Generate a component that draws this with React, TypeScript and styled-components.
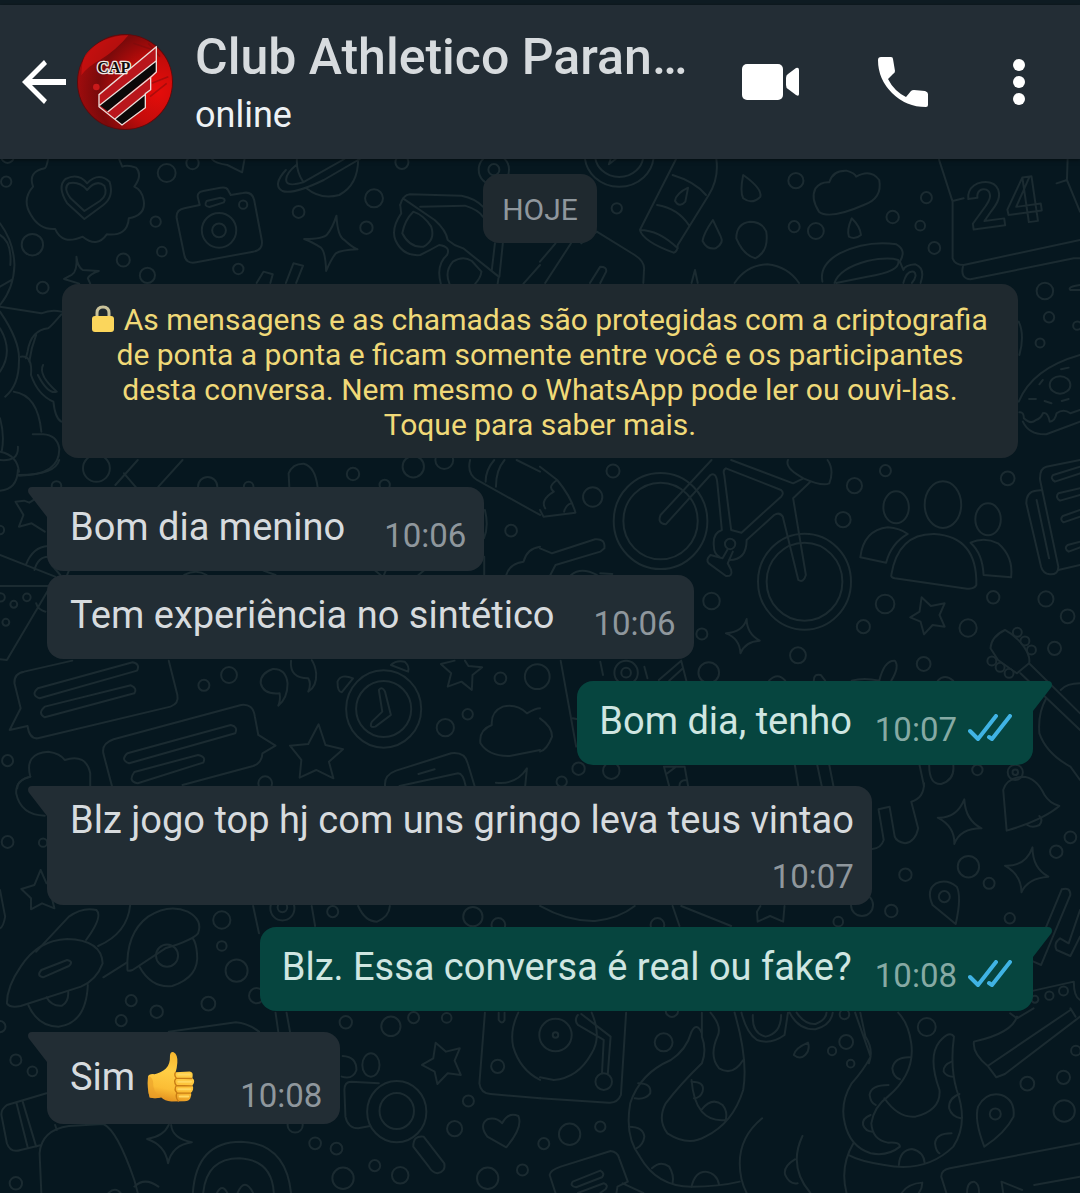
import React from 'react';
import styled, { createGlobalStyle, css } from 'styled-components';

const color = {
  strip: '#0f1c23',
  bar: '#232d35',
  wallpaper: '#06171f',
  doodle: '#1b2b31',
  incoming: '#222d34',
  outgoing: '#06453f',
  pill: '#1f292f',
  text: '#d7dbde',
  sentText: '#cfe6e1',
  muted: '#8f979d',
  sentMuted: '#86aaa4',
  notice: '#f0d978',
  tick: '#40b3e4',
};

const GlobalStyle = createGlobalStyle`
  *, *::before, *::after { box-sizing: border-box; }
  body {
    margin: 0;
    background: ${color.wallpaper};
    font-family: Roboto, 'Noto Sans', sans-serif;
  }
  button {
    border: 0;
    padding: 0;
    background: none;
    color: inherit;
    font: inherit;
    cursor: pointer;
  }
`;

/* ---------- Wallpaper ---------- */

type Dot = [number, number, number, number?];
type Tile = { x: number; y: number; dots: Dot[]; lines: string[] };

const tiles: Tile[] = [
  {
    x: 0,
    y: 155,
    dots: [
      [18, 80, 15], [22, 5, 18], [484, 54, 26], [559, 24, 18], [452, 200, 15], [94, 269, 31],
      [358, 315, 19], [428, 361, 22], [470, 290, 14], [124, 398, 17], [692, 342, 15], [867, 171, 17],
      [1086, 130, 26], [1064, 218, 18], [1167, 22, 19], [1434, 44, 16], [1434, 44, 44],
      [636, 226, 50], [636, 226, 20], [706, 149, 12],
    ],
    lines: [
      'M140 10Q135 38 130 40Q80 50 96 95Q62 135 90 180Q115 225 160 222Q180 272 240 245Q282 280 310 238Q370 245 374 190Q425 180 417 135Q412 105 390 95Q415 60 395 38Q370 28 355 35L345 10',
      'M245 192L195 145Q165 95 190 72Q228 52 253 85Q285 50 318 80Q332 125 300 150Z',
      'M245 168L205 130Q182 98 200 85Q230 78 253 105Q280 72 303 92Q315 120 290 138Z',
      'M535 160Q510 165 513 190L535 300Q540 328 570 322L735 290Q765 285 760 255L738 135Q732 108 705 114L670 120L662 105Q658 95 640 98L590 108Q570 112 575 130L580 150Z',
      'M600 138L640 128Q658 130 650 142L608 156Q590 154 600 138Z',
      'M977 182Q980 245 1000 255Q1020 275 1038 283Q990 285 975 295Q960 315 947 348Q945 290 932 278Q905 260 883 252Q940 252 950 238Q965 220 977 182Z',
      'M222 305Q225 335 240 345L287 348Q260 358 255 370L262 386M222 305Q225 350 208 360L186 372L230 386',
      'M862 12Q860 50 880 80M1040 12Q1040 90 985 120Q930 135 890 100M830 45Q790 90 820 108Q850 120 940 75L1045 12M860 30Q825 60 832 80Q838 95 880 82L1000 12',
      'M615 12Q625 25 660 30L703 52L710 12',
      'M1162 150Q1170 120 1190 118L1340 122Q1380 130 1402 155M1220 155L1350 152Q1390 165 1402 185M1170 130L1262 195Q1295 225 1300 255L1320 270L1345 280L1448 365L1445 386',
      'M1162 150L1165 175Q1135 220 1148 255Q1170 305 1220 300Q1250 285 1275 270Q1310 275 1298 300Q1265 330 1280 386',
      'M1200 170Q1175 195 1168 235Q1190 280 1230 275Q1265 255 1252 215Q1230 180 1200 170Z',
      'M1305 386Q1290 350 1315 320Q1345 300 1370 318L1398 350Q1395 370 1380 386M1437 265L1428 345M1460 265L1450 365M1520 386L1568 330',
      'M0 205Q40 260 42 330Q40 400 0 450M0 240Q35 260 30 330M34 375L0 395',
      'M0 455L120 475Q150 462 178 470M178 478Q150 512 140 520Q90 525 80 590L75 610M105 540Q90 580 85 620',
      'M0 470Q60 560 55 620Q55 690 15 725M0 520Q40 590 0 650M40 710Q110 720 120 830M95 838L125 838Q165 840 172 880Q175 960 55 962M0 890Q50 900 55 950M0 790Q14 840 5 890',
      'M60 605Q95 600 90 660Q110 720 155 740Q160 790 178 800M125 630Q110 660 165 710Q140 720 110 660',
      'M745 384L765 350L792 358L785 384M830 384L852 325L880 332L860 384',
    ],
  },
  {
    x: 540,
    y: 155,
    dots: [
      [223, 160, 15], [743, 77, 22], [738, 215, 16], [801, 228, 23], [1024, 186, 18], [1104, 212, 14],
      [1122, 128, 16], [1145, 279, 17], [1466, 408, 24], [1478, 487, 15], [1452, 564, 13],
      [1560, 512, 12], [230, 0, 100, 95], [230, 0, 70, 66], [1510, 690, 30, 26],
    ],
    lines: [
      'M205 12L200 28L220 12',
      'M395 12L290 225Q300 260 388 293Q400 290 400 270L490 120Q520 70 512 12M290 225Q345 225 400 280M385 60Q450 80 482 120M340 150Q400 160 432 210',
      'M430 98Q395 115 392 138Q405 160 422 140Z',
      'M590 60Q580 110 590 130Q615 150 640 125Q645 100 590 60Z',
      'M502 195Q475 235 472 258Q485 285 510 280Q535 265 525 245Z',
      'M905 190Q890 225 897 245Q915 255 932 240Q930 215 905 190Z',
      'M610 200Q570 205 570 250Q590 300 625 310Q665 290 657 230Q645 200 610 200Z',
      'M840 82Q850 45 890 47Q915 55 918 65Q960 40 985 75Q995 130 940 150Q840 195 810 170Q785 130 800 100Q815 80 840 82Z',
      'M820 380Q810 330 870 295Q950 255 1035 268Q1065 285 1045 320M855 384Q870 340 950 318Q1010 305 1040 315Q1050 350 950 365L860 384M1045 320L1055 345Q1060 330 1090 328Q1120 340 1105 384M1055 384Q1065 345 1085 350Q1098 360 1080 384',
      'M565 384Q600 330 660 328Q720 335 752 384M440 384L450 345L458 384',
      'M165 230L275 300Q305 320 302 345L300 384M165 230L120 265M90 265L15 384M45 265L0 320M145 384L175 335Q195 335 192 350L175 384',
      'M1158 12L1198 140L1198 310Q1205 330 1230 330L1568 255M1198 138L1230 130M1532 12L1530 75L1568 170M1500 85L1530 75M1228 335Q1220 370 1250 373L1550 310L1568 310',
      'M1568 600Q1430 640 1390 740M1392 772Q1405 770 1405 790Q1425 810 1440 795Q1455 790 1460 775Q1475 770 1480 800Q1495 800 1500 775Q1520 760 1540 775L1568 765M1402 800Q1420 840 1470 838L1568 800',
      'M1450 688L1460 675M1513 643L1535 638M1420 732L1440 732M1465 738L1485 745M1515 738L1535 732M1390 500Q1408 540 1392 600M1568 390Q1530 395 1540 405L1568 405',
    ],
  },
  {
    x: 0,
    y: 460,
    dots: [
      [280, 25, 39], [1025, 42, 18], [1200, 20, 31], [1290, 0, 26], [603, 80, 28], [722, 80, 14],
      [164, 78, 14], [1117, 75, 15], [1484, 212, 17], [0, 210, 12], [2, 412, 12], [78, 412, 11],
      [40, 433, 10], [17, 487, 10], [22, 902, 16], [592, 676, 16], [665, 645, 23], [1293, 803, 25],
      [1358, 763, 15], [1453, 655, 17], [1560, 650, 36], [770, 970, 20], [1114, 747, 109, 116], [1114, 747, 80, 84],
    ],
    lines: [
      'M0 0Q55 5 52 -40M55 45Q160 45 172 0M0 92Q50 88 52 30',
      'M335 75L400 0M360 40L395 82M460 80L530 0M840 80L838 40Q850 10 882 11Q915 20 922 80',
      'M1365 0Q1355 40 1385 60L1568 165M1410 65Q1410 30 1435 0M1440 80Q1440 30 1465 0M1500 0L1568 35',
      'M100 118L85 128L70 122L45 125Q60 150 68 165L55 200L92 190L130 215',
      'M0 285L160 350M0 378L150 378M140 390L20 600L0 598M75 315Q95 260 140 258M100 330Q110 290 140 290M175 345L150 315M195 345L200 332M105 430Q110 450 132 455',
      'M535 345Q570 325 600 345M765 332L800 345M1090 332L1105 345M1115 345L1120 332M1215 345L1230 332',
      'M1568 260Q1530 265 1520 305Q1480 310 1470 345M1408 150Q1420 200 1405 235M1406 290L1406 345',
      'M210 602L70 635Q40 640 42 670L60 745L28 810L80 798Q85 838 110 835L495 740Q520 730 515 705L490 602',
      'M110 685L385 607Q408 612 398 632L115 715Q88 705 110 685ZM130 740L380 676Q400 685 390 700L130 772Q108 760 130 740Z',
      'M325 978L300 880Q295 850 330 838L700 735Q735 730 740 770L750 825L800 857L762 880Q760 910 735 918L530 975',
      'M370 880L670 795Q692 800 683 820L375 910Q348 900 370 880ZM390 936L575 885Q600 890 590 908L400 970Q370 965 390 936Z',
      'M50 985Q50 960 88 950Q70 880 140 875Q175 880 188 900Q250 880 262 940L262 980',
      'M835 670Q830 625 792 627Q755 640 757 670Q765 705 812 700Q815 720 808 737Q835 715 835 670ZM845 602Q840 655 895 655Q905 670 895 695Q920 680 918 640Q915 615 905 600',
      'M1100 690Q1110 678 1118 695L1135 765L1090 800Q1070 805 1080 785L1110 755ZM1025 655Q990 640 980 665Q980 695 992 697ZM1135 615Q1150 600 1175 605Q1190 620 1185 635Z',
      'M925 793L945 855L996 868L955 905L968 955L918 930L870 953L875 900L842 857L895 852Z',
      'M1320 602L1280 612L1310 640L1300 680L1340 665L1370 690L1372 645L1400 622L1360 618L1350 602',
      'M1568 745Q1555 745 1530 760Q1500 730 1460 740Q1425 755 1428 795Q1390 810 1395 850Q1420 890 1480 888L1568 870',
      'M1118 978Q1115 945 1150 932L1310 880Q1350 875 1358 910L1378 978M1160 978L1330 940Q1345 940 1352 978M1215 942L1262 928M1440 968Q1500 975 1530 925L1525 978',
    ],
  },
  {
    x: 540,
    y: 460,
    dots: [
      [212, 33, 19], [153, 111, 28], [913, 77, 22], [880, 179, 22], [1003, 32, 16], [1358, 55, 20],
      [498, 423, 24], [470, 522, 16], [749, 586, 23], [939, 500, 19], [1002, 432, 27], [1114, 612, 20],
      [1316, 412, 18], [1469, 417, 22], [1532, 469, 20], [1494, 565, 19], [1243, 504, 25], [250, 638, 34],
      [250, 638, 14], [490, 638, 30], [112, 926, 18], [207, 932, 24], [63, 965, 15], [1270, 930, 15],
      [1380, 937, 22], [1380, 937, 8], [350, 183, 136, 144], [350, 183, 108, 115], [768, 365, 135, 144],
      [768, 365, 110, 117], [552, 252, 15], [1170, 134, 53, 70], [1034, 142, 37, 48], [1301, 178, 37, 48],
      [1386, 517, 13], [1408, 543, 13], [1427, 570, 13], [1312, 603, 13], [1336, 622, 13], [1362, 640, 13],
    ],
    lines: [
      'M498 0L350 165Q340 190 365 193L495 45Q512 35 515 70L528 210M555 0L735 70L765 55Q710 25 720 0M765 55Q820 80 840 70Q855 30 835 0M785 65L735 115L772 345Q765 370 750 360L705 170Q695 155 680 165L600 240Q600 300 550 300M540 25L700 90Q710 100 700 110L585 218L555 210L535 45Q530 30 540 25M528 210Q500 220 505 260Q505 280 520 290',
      'M545 268L530 295L495 285Q480 300 490 310L540 348Q560 350 555 330L545 310L560 275',
      'M0 20L50 60Q90 110 103 158L10 170L0 150M50 60Q20 80 40 95Q0 120 15 145M70 155Q75 135 90 130',
      'M0 265L35 280L160 238Q190 235 187 265L175 275L45 315L30 345M90 345Q120 320 165 345M175 340L210 342',
      'M1020 345Q1040 220 1145 222Q1270 230 1267 375Q1262 388 1240 386L1030 355Q1018 352 1020 345ZM1005 308L930 292Q940 210 1010 202Q1045 205 1068 222Q1020 250 1005 308ZM1250 248Q1290 230 1330 250Q1375 290 1368 352L1288 345Q1285 280 1250 248Z',
      'M1568 0L1470 20Q1450 25 1452 60L1505 320Q1505 345 1480 343Q1460 340 1455 320L1412 130Q1412 95 1440 92L1458 90M1505 330L1568 315M1442 120L1478 295M1568 40L1495 65Q1480 55 1490 45L1568 20M1568 105L1510 122Q1495 112 1505 100L1568 85M1568 170L1520 187Q1508 178 1518 168L1568 150M1568 262L1535 275Q1520 265 1532 255L1568 245',
      'M1108 412L1135 438L1175 430L1160 465L1175 500L1140 495L1115 523L1105 485L1075 472L1102 455ZM600 477Q600 520 638 542Q595 545 582 580Q580 535 540 520Q590 515 600 477Z',
      'M1350 510Q1310 530 1308 565L1330 600Q1370 630 1385 640L1420 610Q1425 590 1405 560Q1385 530 1350 510ZM1420 610L1568 760M1395 640L1568 810M1568 670Q1530 670 1512 690M1470 715Q1445 760 1450 820Q1470 880 1540 920L1568 960',
      'M60 602L105 860M175 605L183 645M303 620L312 655M345 660L410 602M375 662L415 625M410 602L425 662M0 775Q35 800 35 830Q20 870 0 875M95 775L110 778',
      'M665 662Q690 635 712 662M795 662Q795 640 815 645L828 662M985 662Q1000 600 1030 602Q1045 620 1020 662M905 662Q940 652 985 662M1155 662Q1175 640 1200 662',
      'M375 978L360 920L420 920L430 978M370 940L395 920M405 978Q405 960 425 960M740 915L750 978M805 915L818 978M840 915L852 978M1102 915L1115 978M1130 915Q1130 975 1165 972Q1205 960 1200 915',
    ],
  },
  {
    x: 0,
    y: 770,
    dots: [
      [22, 216, 17], [125, 218, 12], [644, 450, 25], [644, 528, 14], [687, 602, 32], [605, 701, 20],
      [455, 725, 18], [381, 692, 16], [352, 752, 16], [46, 870, 16], [94, 904, 14], [46, 1240, 18],
      [820, 415, 35], [820, 412, 14], [966, 425, 16], [1373, 440, 28], [1447, 465, 20], [745, 677, 22],
      [1004, 757, 18], [1135, 769, 28], [1201, 743, 16], [1297, 744, 14], [1445, 889, 19], [1360, 993, 16],
      [1320, 1076, 22], [915, 1120, 17], [977, 1136, 17], [1088, 1187, 16], [996, 1225, 31],
      [1162, 1216, 24], [1416, 1225, 31], [1517, 1200, 16], [857, 1065, 22], [0, 770, 16], [485, 557, 32],
      [1077, 885, 25, 35], [1152, 1025, 86, 92], [1152, 1023, 50, 54],
    ],
    lines: [
      'M20 700Q20 650 60 590Q110 510 195 507Q295 510 298 580Q280 630 235 650L60 708Q30 715 20 700ZM120 600L195 570Q215 575 200 588L125 622Q105 618 120 600Z',
      'M105 545L200 440Q240 410 280 420Q300 440 250 510M378 405Q370 490 285 528M82 705Q110 770 170 770Q250 760 255 645M135 682Q150 710 180 707Q200 695 198 665M300 622L368 578',
      'M370 600Q365 490 430 440Q490 400 545 425Q590 450 575 490Q560 510 480 535L385 600Q370 605 370 600ZM405 590Q440 655 500 648Q580 620 572 550Q570 520 560 505',
      'M118 300L100 345L62 357L90 385L90 418L122 400L158 415L152 390M118 300L135 340M88 20Q45 30 47 70Q60 135 130 137M0 360L15 440Q10 470 0 475',
      'M735 408L752 490M905 408L915 468M1040 408Q1060 455 1095 455Q1130 440 1132 408M490 785L685 757Q720 760 752 785M800 728L808 785M832 728L842 785',
      'M1265 818L1295 845L1335 835L1320 872L1338 915L1300 910L1270 942L1262 905L1225 885L1258 865Z',
      'M995 858Q1035 860 1035 900Q1025 930 992 920M1100 940L1020 935Q1000 935 1000 960L1003 1040Q1010 1075 1040 1075L1075 1068M1230 1100L1290 1180Q1295 1205 1270 1210Q1255 1208 1245 1190L1200 1130Q1200 1095 1230 1100Z',
      'M1470 1132L1415 1100Q1390 1065 1415 1048Q1440 1040 1458 1060Q1475 1025 1505 1038Q1520 1070 1470 1132Z',
      'M1408 728L1392 940Q1395 970 1425 972L1568 985M1448 728L1448 750Q1458 765 1465 750L1465 728M1505 728Q1480 780 1490 830Q1510 900 1568 930',
      'M135 970L20 1005Q0 1020 5 1040L20 1120Q30 1150 60 1140L120 1125M48 1000L80 1130M65 992L105 1130M120 1269L115 1150Q120 1080 200 1068L300 1062Q340 1080 390 1230L400 1269M160 1065L165 1080M390 1250Q420 1220 460 1250',
      'M497 1065Q500 1105 557 1117Q500 1125 488 1180Q480 1125 427 1107Q475 1100 490 1065M560 1269Q570 1115 700 1115Q830 1120 845 1269M590 1269Q600 1165 695 1165Q790 1170 795 1269M630 1269Q645 1240 660 1269M690 1269Q710 1220 735 1269M315 1269Q335 1250 350 1269',
    ],
  },
  {
    x: 540,
    y: 770,
    dots: [
      [1061, 314, 18], [1244, 290, 31], [1304, 340, 16], [1540, 202, 17], [1499, 245, 18], [1020, 423, 18],
      [1364, 445, 15], [935, 405, 32], [866, 455, 14], [341, 465, 20], [1174, 380, 16], [359, 817, 26],
      [848, 843, 12], [889, 816, 20], [902, 881, 11], [1123, 771, 26], [1415, 941, 20], [1520, 922, 19],
      [1522, 1023, 31], [1556, 842, 14], [86, 1093, 31], [175, 1070, 15], [11, 1121, 16], [1322, 1032, 16],
      [1437, 688, 10], [1479, 677, 12], [1520, 663, 13], [884, 733, 14], [383, 722, 18], [45, 795, 47],
      [45, 795, 8], [185, 935, 24],
    ],
    lines: [
      'M1115 40Q1115 85 1078 95L1098 175Q1090 215 1060 220Q1035 215 1030 200L1015 110L983 118L998 210Q990 235 965 237',
      'M1355 182L1345 60Q1355 25 1400 20Q1440 20 1465 75Q1480 100 1508 108Q1460 150 1355 182ZM1415 165Q1430 175 1450 165Q1462 150 1450 138',
      'M1232 88Q1235 150 1282 175Q1220 175 1203 222Q1205 170 1155 143Q1210 145 1232 88ZM1430 232Q1430 295 1476 320Q1415 325 1398 367Q1398 315 1350 287Q1410 290 1430 232Z',
      'M1207 462L1140 405Q1120 360 1150 340Q1180 325 1210 350Q1225 380 1207 462Z',
      'M1515 358L1470 470M1515 358Q1540 350 1540 375L1455 585L1433 575M1568 420L1535 520L1510 505Q1490 520 1500 540L1540 558L1568 500',
      'M1433 662L1550 635Q1550 680 1568 690M1385 740Q1370 790 1260 815Q1255 850 1300 888L1325 922L1350 912L1568 740M1300 888L1540 720M1540 715L1555 740M1365 730L1385 745L1433 715',
      'M0 408Q80 455 160 453Q230 445 275 408M385 408L405 468M410 408L555 468M640 408L630 425L632 455L668 438L706 455L710 408',
      'M150 728Q180 800 150 850Q110 925 40 930L0 922M110 735Q98 750 110 765L185 810L180 910M120 732L205 800L197 910M250 728L235 975Q225 1000 200 998L0 985',
      'M470 728L470 800Q485 840 470 880Q410 940 365 1000Q340 1050 370 1090Q430 1130 480 1100Q560 1060 590 960Q605 870 565 728M470 790Q455 755 440 785Q425 840 380 870Q290 910 262 1000Q245 1100 290 1160Q340 1250 440 1250Q520 1250 580 1235M495 728Q530 770 515 800Q490 860 520 895Q560 920 590 870M440 930Q450 1060 540 1050',
      'M440 935Q480 935 472 965Q465 985 447 985M470 1018Q500 980 530 1005Q545 1025 540 1048M285 940Q325 940 320 970Q305 990 275 985M258 1070Q300 1070 303 1100Q300 1125 280 1135M325 1195Q350 1170 375 1190Q390 1215 385 1240M440 1250Q450 1205 480 1205Q515 1210 520 1245',
      'M645 1045Q580 1100 580 1180Q580 1230 600 1269M762 1098Q720 1190 785 1269M740 1168Q705 1190 712 1215Q725 1245 748 1240',
      'M585 728Q600 790 630 810Q670 825 710 795L720 728M618 735Q615 790 655 800Q700 790 700 735M725 728Q750 780 800 778Q845 765 850 728M745 728Q770 765 800 762Q830 750 832 728M778 818Q740 835 737 855Q755 870 770 855Q785 840 778 818Z',
      'M915 728L960 860Q940 900 905 940Q870 1000 885 1060Q900 1130 960 1150Q1010 1160 1045 1130Q1045 1115 1010 1118Q965 1110 962 1060Q970 1010 1010 980Q1090 910 1078 820Q1070 760 1040 728M930 728L945 800Q970 840 955 880',
      'M1000 985Q1040 1045 1090 1040Q1165 1020 1160 960Q1125 860 1160 815Q1190 780 1202 800Q1190 890 1210 960Q1245 1060 1200 1130Q1120 1210 1000 1185Q930 1175 895 1155M910 1120Q870 1190 890 1269',
      'M1075 862Q1030 860 1023 895Q1025 920 1045 928M1012 945Q960 945 957 975Q960 1000 975 1005M960 1035Q935 1045 938 1065Q945 1085 965 1085M1195 875Q1170 885 1172 905Q1180 920 1200 920M1218 972Q1185 985 1188 1015Q1195 1040 1222 1045M1195 1090Q1150 1090 1147 1120Q1150 1145 1160 1150M1042 1185Q1045 1140 1080 1137Q1115 1145 1117 1180',
      'M1290 1130Q1260 1050 1272 1010Q1295 965 1340 975Q1380 990 1375 1040Q1350 1090 1290 1130Z',
      'M1180 1269L1165 1220Q1165 1200 1190 1195L1568 1120M1240 1269Q1240 1235 1260 1235Q1275 1240 1275 1269M1345 1269L1340 1235L1400 1260M1435 1245L1568 1220M1050 1269Q1070 1240 1110 1238Q1110 1255 1100 1269',
      'M45 1269L28 1215Q30 1200 60 1190L205 1143Q225 1145 230 1165L255 1235L225 1250L222 1269M240 1240L300 1269M95 1235L175 1202Q190 1210 180 1222L105 1252Q85 1248 95 1235ZM110 1269L185 1240Q200 1245 190 1258L175 1269',
    ],
  },
];

const WallpaperArt = styled.svg`
  position: absolute;
  inset: 0;
  width: 100%;
  height: 100%;
  z-index: -1;
  fill: none;
  stroke: ${color.doodle};
  stroke-width: 2px;
  stroke-linecap: round;
  stroke-linejoin: round;

  path, ellipse, text { vector-effect: non-scaling-stroke; }
  text { font: 700 190px Roboto, sans-serif; }
`;

const Wallpaper = () => (
  <WallpaperArt viewBox="0 159 1080 1034" preserveAspectRatio="xMidYMin slice" aria-hidden="true">
    {tiles.map((tile) => (
      <g key={`${tile.x}-${tile.y}`} transform={`translate(${tile.x} ${tile.y}) scale(0.3444 0.3333)`}>
        {tile.dots.map(([cx, cy, rx, ry = rx * 1.04], i) => (
          <ellipse key={i} cx={cx} cy={cy} rx={rx} ry={ry} />
        ))}
        {tile.lines.map((d) => (
          <path key={d} d={d} />
        ))}
      </g>
    ))}
    <g transform="translate(540 155) scale(0.3444 0.3333)">
      <text transform="translate(1250 225) rotate(-8)">24</text>
    </g>
  </WallpaperArt>
);

/* ---------- Layout ---------- */

const Screen = styled.div`
  display: flex;
  flex-direction: column;
  min-height: 100vh;
`;

const StatusStrip = styled.div`
  height: 5px;
  background: ${color.strip};
`;

const TopBar = styled.header`
  display: flex;
  align-items: center;
  min-height: 154px;
  padding: 0 47px 0 20px;
  background: ${color.bar};
  box-shadow: 0 1px 4px rgba(0, 0, 0, 0.5);
  z-index: 1;
`;

const IconButton = styled.button<{ $width: number }>`
  display: flex;
  justify-content: center;
  flex: none;
  width: ${({ $width }) => $width}px;
  color: #fff;

  svg { display: block; fill: currentColor; }
`;

const Avatar = styled.svg`
  flex: none;
  width: 96px;
  height: 96px;
  margin-left: 9px;
  border-radius: 50%;
`;

const Contact = styled.div`
  flex: 1;
  min-width: 0;
  padding-left: 22px;
  white-space: nowrap;
`;

const ContactName = styled.h1`
  margin: 0;
  color: ${color.text};
  font-size: 50px;
  font-weight: 500;
  line-height: 66px;
`;

const Presence = styled.p`
  margin: 0;
  color: #eef2f5;
  font-size: 36px;
  line-height: 50px;
`;

const Actions = styled.div`
  display: flex;
  align-items: center;
  gap: 72px;
`;

const Chat = styled.main`
  position: relative;
  z-index: 0;
  display: flex;
  flex: 1;
  flex-direction: column;
  align-items: center;
  overflow: hidden;
  padding: 15px 47px 47px;
  background: ${color.wallpaper};
`;

const pill = css`
  border-radius: 16px;
  background: ${color.pill};
  font-size: 30px;
  line-height: 35px;
`;

const DateChip = styled.div`
  ${pill}
  padding: 18px 19px 16px;
  color: ${color.muted};
`;

const Notice = styled.button`
  && {
    ${pill}
    width: 100%;
    max-width: 956px;
    margin: 41px 0 29px;
    padding: 18px 28px 16px;
    color: ${color.notice};
    text-align: center;
  }

  svg { margin-right: 2px; vertical-align: -3px; }
`;

const Messages = styled.ol`
  display: flex;
  flex-direction: column;
  align-self: stretch;
  margin: 0;
  padding: 0;
  list-style: none;
`;

type Layout = 'inline' | 'stacked' | 'emoji';

const layouts = {
  inline: css`padding-top: 17px; padding-bottom: 21px;`,
  stacked: css`flex-direction: column; gap: 20px; padding-top: 11px; padding-bottom: 14px;`,
  emoji: css`padding-top: 17px; padding-bottom: 14px;`,
};

const sides = {
  sent: css`
    align-self: flex-end;
    column-gap: 23px;
    margin-top: 22px;
    padding-left: 22px;
    padding-right: 21px;
    background: ${color.outgoing};
    color: ${color.sentText};
  `,
  received: css`
    align-self: flex-start;
    column-gap: 39px;
    margin-top: 21px;
    padding-left: 23px;
    padding-right: 18px;
    background: ${color.incoming};
    color: ${color.text};
  `,
};

const Bubble = styled.li<{ $sent: boolean; $tail: boolean; $layout: Layout }>`
  position: relative;
  display: flex;
  align-items: flex-end;
  border-radius: 16px;
  ${({ $sent }) => ($sent ? sides.sent : sides.received)}
  ${({ $layout }) => layouts[$layout]}
  ${({ $tail, $sent }) => $tail && ($sent ? 'border-top-right-radius: 0;' : 'border-top-left-radius: 0;')}
  ${({ $tail }) => !$tail && 'margin-top: 4px;'}

  &:first-child { margin-top: 0; }
`;

const Tail = styled.svg<{ $sent: boolean }>`
  position: absolute;
  top: 0;
  width: 19px;
  height: 30px;
  ${({ $sent }) => ($sent ? 'left: 100%;' : 'right: 100%; transform: scaleX(-1);')}
  fill: ${({ $sent }) => ($sent ? color.outgoing : color.incoming)};
`;

const Body = styled.p<{ $layout: Layout }>`
  display: flex;
  align-items: center;
  gap: 12px;
  margin: 0;
  font-size: 38px;
  line-height: ${({ $layout }) => ($layout === 'emoji' ? 56 : 46)}px;
  padding-bottom: ${({ $layout }) => ($layout === 'emoji' ? 5 : 0)}px;
  padding-right: ${({ $layout }) => ($layout === 'emoji' ? 6 : 0)}px;
`;

const Meta = styled.span<{ $sent: boolean }>`
  display: flex;
  align-items: flex-end;
  gap: 11px;
  color: ${({ $sent }) => ($sent ? color.sentMuted : color.muted)};
  font-size: 33px;
  line-height: 28px;
`;

/* ---------- Drawings ---------- */

const Crest = () => (
  <Avatar viewBox="231 102 288 288" role="img" aria-label="Club Athletico Paranaense">
    <defs>
      <radialGradient id="crest-red" cx="0.85" cy="0.6" r="0.85">
        <stop offset="0" stopColor="#e60d0a" />
        <stop offset="0.4" stopColor="#c40c0b" />
        <stop offset="0.75" stopColor="#7a0a0b" />
        <stop offset="1" stopColor="#a00c0d" />
      </radialGradient>
    </defs>
    <circle cx="375" cy="246" r="143" fill="url(#crest-red)" stroke="#5a0b0d" strokeWidth="4" />
    <path d="M256 162Q310 105 385 106Q350 150 300 180Q262 200 244 226Q244 190 256 162Z" fill="#dc1310" opacity="0.6" />
    <path d="M400 130L460 150M455 250L505 230M450 290L500 250M445 130L480 170" stroke="#780b0c" strokeWidth="5" opacity="0.5" />
    <circle cx="289" cy="261" r="10" fill="#c9191a" />
    <path d="M469 140L297 284V320L366 375L436 323V281L452 269V232L469 216Z" fill="#b9161c" />
    <path d="M469 182V214L323 334L299 316Z" fill="#0a0808" />
    <path d="M436 283V322L366 374L344 356Z" fill="#0a0808" />
    <path
      d="M469 140L297 284V320L366 375L436 323V281L452 269V232L469 216ZM469 182L299 316M452 232L323 336M436 283L344 358"
      fill="none"
      stroke="#eadcd8"
      strokeWidth="4"
    />
    <text
      x="292"
      y="220"
      fontFamily="Liberation Serif, serif"
      fontSize="48"
      fontWeight="700"
      fill="#120c0c"
      stroke="#f2eae6"
      strokeWidth="8"
      strokeLinejoin="round"
      paintOrder="stroke"
    >
      CAP
    </text>
  </Avatar>
);

const BackIcon = () => (
  <svg width="44" height="44" viewBox="0 0 44 44" aria-hidden="true">
    <path d="M22 0L25 4L10 19H44V25H10L25 40L22 44L0 22Z" />
  </svg>
);

const VideoIcon = () => (
  <svg width="58" height="36" viewBox="0 0 58 36" aria-hidden="true">
    <rect width="41" height="36" rx="5" />
    <path d="M44 14Q44 11 46 10L54 4Q57 3 57 6V30Q57 33 54 31L46 25Q44 24 44 21Z" />
  </svg>
);

const PhoneIcon = () => (
  <svg width="50" height="50" viewBox="0 0 50 50" aria-hidden="true">
    <path d="M3 0H13Q15 0 15 2L17 14Q17 16 15 17L10 22Q16 34 28 40L33 34Q34 33 36 33L47 34Q50 35 50 37V48Q50 50 48 50Q28 50 14 36Q0 22 0 3Q0 0 3 0Z" />
  </svg>
);

const MenuIcon = () => (
  <svg width="12" height="46" viewBox="0 0 12 46" aria-hidden="true">
    <circle cx="6" cy="6" r="6" />
    <circle cx="6" cy="23" r="6" />
    <circle cx="6" cy="40" r="6" />
  </svg>
);

const LockIcon = () => (
  <svg width="22" height="28" viewBox="1 0 22 28" aria-hidden="true">
    <path d="M6 13V8Q6 2 12 2Q18 2 18 8V13" fill="none" stroke="#c9c29a" strokeWidth="3" />
    <rect x="1" y="11" width="22" height="16" rx="3" fill="#fbd65c" />
  </svg>
);

const ReadTicks = () => (
  <svg width="44" height="30" viewBox="0 0 44 30" role="img" aria-label="Lida">
    <path
      d="M2 17L10 25L28 2M21 23L24 25L42 2"
      fill="none"
      stroke={color.tick}
      strokeWidth="4"
      strokeLinecap="round"
      strokeLinejoin="round"
    />
  </svg>
);

const ThumbsUp = () => (
  <svg width="48" height="52" viewBox="52 35 144 155" role="img" aria-label="👍">
    <defs>
      <linearGradient id="thumb" x1="0.6" y1="0" x2="0.4" y2="1">
        <stop offset="0" stopColor="#f7b52c" />
        <stop offset="0.4" stopColor="#ffce45" />
        <stop offset="0.75" stopColor="#fbbd35" />
        <stop offset="1" stopColor="#e28f1e" />
      </linearGradient>
    </defs>
    <path
      d="M55 112Q57 102 75 104Q95 100 108 88Q122 75 121 47Q123 35 132 38Q145 45 143 70Q142 85 138 98L180 96Q190 98 189 107Q189 112 188 116Q195 120 193 129Q192 134 188 138Q192 143 190 151Q188 157 184 160Q187 168 182 176Q178 185 165 185L125 186Q105 184 95 174Q75 178 60 174Q52 150 55 112Z"
      fill="url(#thumb)"
    />
    <path d="M55 112Q52 150 60 174Q75 178 92 174Q70 160 70 125Q64 108 55 112Z" fill="#e9a02a" opacity="0.6" />
    <path
      d="M138 98Q132 106 140 116L186 117M140 116Q130 124 140 138L186 139M140 138Q132 150 142 160L182 161M142 160Q136 172 146 185"
      fill="none"
      stroke="#c97c14"
      strokeWidth="4"
      strokeLinecap="round"
    />
    <path d="M146 105H180M146 127H184M146 149H182M150 171H176" stroke="#ffd862" strokeWidth="6" strokeLinecap="round" />
  </svg>
);

/* ---------- Content ---------- */

type Message = { text: string; time: string; sent?: boolean; tail?: boolean; layout?: Layout };

const messages: Message[] = [
  { text: 'Bom dia menino', time: '10:06' },
  { text: 'Tem experiência no sintético', time: '10:06', tail: false },
  { text: 'Bom dia, tenho', time: '10:07', sent: true },
  { text: 'Blz jogo top hj com uns gringo leva teus vintao', time: '10:07', layout: 'stacked' },
  { text: 'Blz. Essa conversa é real ou fake?', time: '10:08', sent: true },
  { text: 'Sim', time: '10:08', layout: 'emoji' },
];

const MessageItem = ({ text, time, sent = false, tail = true, layout = 'inline' }: Message) => (
  <Bubble $sent={sent} $tail={tail} $layout={layout}>
    {tail && (
      <Tail $sent={sent} viewBox="0 0 19 30" aria-hidden="true">
        <path d="M0 0H15Q19 0 19 4Q19 6 17 8L0 30Z" />
      </Tail>
    )}
    <Body $layout={layout}>
      {text}
      {layout === 'emoji' && <ThumbsUp />}
    </Body>
    <Meta $sent={sent}>
      <time>{time}</time>
      {sent && <ReadTicks />}
    </Meta>
  </Bubble>
);

export default function App() {
  return (
    <Screen>
      <GlobalStyle />
      <StatusStrip />
      <TopBar>
        <IconButton $width={48} aria-label="Voltar">
          <BackIcon />
        </IconButton>
        <Crest />
        <Contact>
          <ContactName>Club Athletico Paran…</ContactName>
          <Presence>online</Presence>
        </Contact>
        <Actions>
          <IconButton $width={60} aria-label="Chamada de vídeo">
            <VideoIcon />
          </IconButton>
          <IconButton $width={60} aria-label="Chamada de voz">
            <PhoneIcon />
          </IconButton>
          <IconButton $width={28} aria-label="Mais opções">
            <MenuIcon />
          </IconButton>
        </Actions>
      </TopBar>
      <Chat>
        <Wallpaper />
        <DateChip>HOJE</DateChip>
        <Notice>
          <LockIcon /> As mensagens e as chamadas são protegidas com a criptografia de ponta a ponta e ficam
          somente entre você e os participantes desta conversa. Nem mesmo o WhatsApp pode ler ou ouvi-las. Toque
          para saber mais.
        </Notice>
        <Messages>
          {messages.map((message) => (
            <MessageItem key={message.text} {...message} />
          ))}
        </Messages>
      </Chat>
    </Screen>
  );
}
